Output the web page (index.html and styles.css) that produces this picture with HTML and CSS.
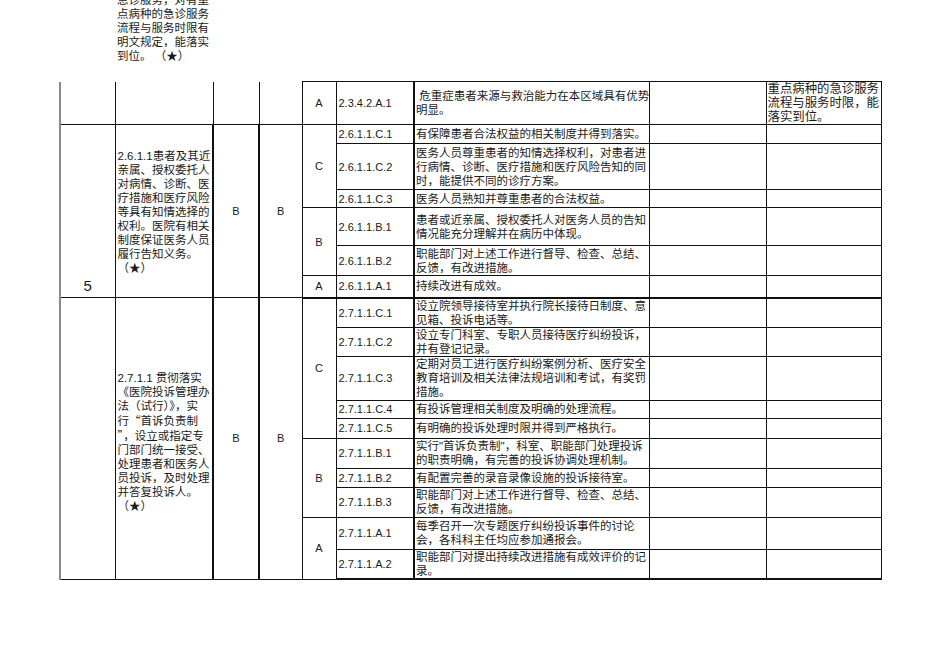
FILE: index.html
```html
<!DOCTYPE html>
<html lang="zh-CN">
<head>
<meta charset="utf-8">
<title>评审标准</title>
<link rel="stylesheet" href="styles.css">
</head>
<body>
<div class="page">
  <div class="carry">
    <div class="carry-text">急诊服务，对有重<br>点病种的急诊服务<br>流程与服务时限有<br>明文规定，能落实<br>到位。 （★）</div>
  </div>
  <table class="sheet">
    <colgroup>
      <col class="c1"><col class="c2"><col class="c3"><col class="c4"><col class="c5"><col class="c6"><col class="c7"><col class="c8"><col class="c9">
    </colgroup>
    <tbody>
      <tr class="r43">
        <td class="first open-top"></td>
        <td class="open-top"></td>
        <td class="open-top"></td>
        <td class="open-top"></td>
        <td class="level">A</td>
        <td class="code">2.3.4.2.A.1</td>
        <td class="desc">&nbsp;危重症患者来源与救治能力在本区域具有优势<br>明显。</td>
        <td></td>
        <td class="note">重点病种的急诊服务<br>流程与服务时限，能<br>落实到位。</td>
      </tr>

      <tr class="r19">
        <td class="first num" rowspan="6">5</td>
        <td class="item item-a" rowspan="6">2.6.1.1患者及其近<br>亲属、授权委托人<br>对病情、诊断、医<br>疗措施和医疗风险<br>等具有知情选择的<br>权利。医院有相关<br>制度保证医务人员<br>履行告知义务。<br>（★）</td>
        <td class="grade" rowspan="6">B</td>
        <td class="grade" rowspan="6">B</td>
        <td class="level" rowspan="3">C</td>
        <td class="code">2.6.1.1.C.1</td>
        <td class="desc">有保障患者合法权益的相关制度并得到落实。</td>
        <td></td>
        <td></td>
      </tr>
      <tr class="r46">
        <td class="code">2.6.1.1.C.2</td>
        <td class="desc">医务人员尊重患者的知情选择权利，对患者进<br>行病情、诊断、医疗措施和医疗风险告知的同<br>时，能提供不同的诊疗方案。</td>
        <td></td>
        <td></td>
      </tr>
      <tr class="r18">
        <td class="code">2.6.1.1.C.3</td>
        <td class="desc">医务人员熟知并尊重患者的合法权益。</td>
        <td></td>
        <td></td>
      </tr>
      <tr class="r38">
        <td class="level" rowspan="2">B</td>
        <td class="code">2.6.1.1.B.1</td>
        <td class="desc">患者或近亲属、授权委托人对医务人员的告知<br>情况能充分理解并在病历中体现。</td>
        <td></td>
        <td></td>
      </tr>
      <tr class="r30">
        <td class="code">2.6.1.1.B.2</td>
        <td class="desc">职能部门对上述工作进行督导、检查、总结、<br>反馈，有改进措施。</td>
        <td></td>
        <td></td>
      </tr>
      <tr class="r22 section-end">
        <td class="level">A</td>
        <td class="code">2.6.1.1.A.1</td>
        <td class="desc">持续改进有成效。</td>
        <td></td>
        <td></td>
      </tr>

      <tr class="r29">
        <td class="first" rowspan="10"></td>
        <td class="item item-b" rowspan="10">2.7.1.1 贯彻落实<br>《医院投诉管理办<br>法（试行）》，实<br>行<span class="cq">“</span>首诉负责制<br><span class="cq">”</span>，设立或指定专<br>门部门统一接受、<br>处理患者和医务人<br>员投诉，及时处理<br>并答复投诉人。<br>（★）</td>
        <td class="grade" rowspan="10">B</td>
        <td class="grade" rowspan="10">B</td>
        <td class="level" rowspan="5">C</td>
        <td class="code">2.7.1.1.C.1</td>
        <td class="desc">设立院领导接待室并执行院长接待日制度、意<br>见箱、投诉电话等。</td>
        <td></td>
        <td></td>
      </tr>
      <tr class="r29">
        <td class="code">2.7.1.1.C.2</td>
        <td class="desc">设立专门科室、专职人员接待医疗纠纷投诉，<br>并有登记记录。</td>
        <td></td>
        <td></td>
      </tr>
      <tr class="r44">
        <td class="code">2.7.1.1.C.3</td>
        <td class="desc">定期对员工进行医疗纠纷案例分析、医疗安全<br>教育培训及相关法律法规培训和考试，有奖罚<br>措施。</td>
        <td></td>
        <td></td>
      </tr>
      <tr class="r18">
        <td class="code">2.7.1.1.C.4</td>
        <td class="desc">有投诉管理相关制度及明确的处理流程。</td>
        <td></td>
        <td></td>
      </tr>
      <tr class="r20">
        <td class="code">2.7.1.1.C.5</td>
        <td class="desc">有明确的投诉处理时限并得到严格执行。</td>
        <td></td>
        <td></td>
      </tr>
      <tr class="r30">
        <td class="level" rowspan="3">B</td>
        <td class="code">2.7.1.1.B.1</td>
        <td class="desc">实行"首诉负责制"，科室、职能部门处理投诉<br>的职责明确，有完善的投诉协调处理机制。</td>
        <td></td>
        <td></td>
      </tr>
      <tr class="r19">
        <td class="code">2.7.1.1.B.2</td>
        <td class="desc">有配置完善的录音录像设施的投诉接待室。</td>
        <td></td>
        <td></td>
      </tr>
      <tr class="r30">
        <td class="code">2.7.1.1.B.3</td>
        <td class="desc">职能部门对上述工作进行督导、检查、总结、<br>反馈，有改进措施。</td>
        <td></td>
        <td></td>
      </tr>
      <tr class="r32">
        <td class="level" rowspan="2">A</td>
        <td class="code">2.7.1.1.A.1</td>
        <td class="desc">每季召开一次专题医疗纠纷投诉事件的讨论<br>会，各科科主任均应参加通报会。</td>
        <td></td>
        <td></td>
      </tr>
      <tr class="r30 last-row">
        <td class="code">2.7.1.1.A.2</td>
        <td class="desc">职能部门对提出持续改进措施有成效评价的记<br>录。</td>
        <td></td>
        <td></td>
      </tr>
    </tbody>
  </table>
</div>
</body>
</html>
```

FILE: styles.css
```css
* {
  box-sizing: border-box;
}

body {
  margin: 0;
  background: #ffffff;
  color: #1a1a1a;
  font-family: "Liberation Sans", "Noto Sans CJK SC", sans-serif;
}

.page {
  padding-left: 59px;
}

.carry {
  height: 81px;
  overflow: hidden;
  padding-left: 58px;
}

.carry-text {
  margin-top: -7px;
  font-size: 11.5px;
  line-height: 14px;
  white-space: nowrap;
}

.sheet {
  border-collapse: collapse;
  table-layout: fixed;
  width: 821px;
}

.c1 { width: 55px; }
.c2 { width: 98px; }
.c3 { width: 46px; }
.c4 { width: 43px; }
.c5 { width: 34px; }
.c6 { width: 78px; }
.c7 { width: 235px; }
.c8 { width: 117px; }
.c9 { width: 115px; }

.r43 { height: 43px; }
.r19 { height: 19px; }
.r46 { height: 46px; }
.r18 { height: 18px; }
.r38 { height: 38px; }
.r30 { height: 30px; }
.r22 { height: 22px; }
.r29 { height: 29px; }
.r44 { height: 44px; }
.r20 { height: 20px; }
.r32 { height: 32px; }

.sheet td {
  border: 1px solid #111;
  padding: 0 2px;
  font-size: 11.5px;
  line-height: 14px;
  vertical-align: middle;
  white-space: nowrap;
  overflow: hidden;
}

.sheet td.open-top {
  border-top: none;
}

.sheet td.first {
  border-left: 2px solid #8a8a8a;
}

.sheet td.num {
  vertical-align: bottom;
  text-align: center;
  font-size: 15px;
  line-height: 18px;
  padding-bottom: 2px;
}

.sheet td.item {
  vertical-align: top;
  padding-left: 2px;
}

.sheet td.item-a {
  padding-top: 24px;
}

.sheet td.item-b {
  padding-top: 73px;
}

.cq {
  font-family: "Noto Sans CJK SC", sans-serif;
}

.sheet td.grade {
  text-align: center;
  font-size: 11px;
  border-left: 2px solid #111;
}

.sheet td.level {
  text-align: center;
  font-size: 11px;
  border-left: 1px solid #777;
}

.sheet td.code {
  font-size: 11px;
  border-left: 1px solid #777;
  padding-left: 2px;
}

.sheet td.desc {
  border-left: 2px solid #111;
  padding-left: 1px;
}

.sheet td.note {
  vertical-align: top;
  font-size: 12.4px;
  line-height: 14px;
  padding-left: 1px;
}

.sheet tr.section-end td {
  border-bottom: 2px solid #111;
}

.sheet tr.last-row td {
  border-bottom: 2px solid #111;
}
```
